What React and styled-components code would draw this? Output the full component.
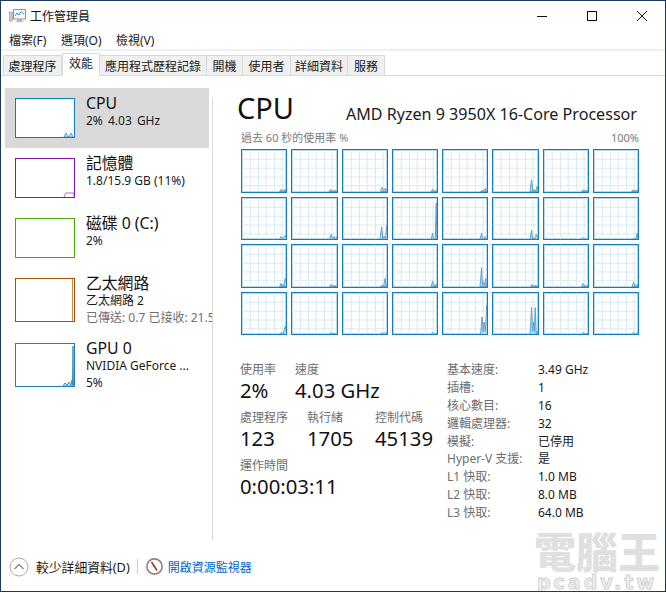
import React from 'react';
import styled, { createGlobalStyle } from 'styled-components';

const GlobalStyle = createGlobalStyle`
  html, body {
    margin: 0;
    padding: 0;
    background: #fff;
    overflow: hidden;
  }
  * {
    box-sizing: border-box;
  }
`;

const FONT = '"Noto Sans", "Noto Sans CJK TC", sans-serif';

const Window = styled.div`
  position: relative;
  width: 666px;
  height: 592px;
  display: flex;
  flex-direction: column;
  overflow: hidden;
  background: #fff;
  border: 1px solid #1b3a63;
  font-family: ${FONT};
  font-size: 12px;
  color: #1a1a1a;
  &::before {
    content: '';
    position: absolute;
    left: -1px;
    top: -1px;
    width: 330px;
    height: 1px;
    background: #6d6d6d;
  }
  &::after {
    content: '';
    position: absolute;
    left: -1px;
    top: -1px;
    width: 1px;
    height: 530px;
    background: #6d6d6d;
  }
`;

const TitleBar = styled.div`
  height: 29px;
  flex: none;
  display: flex;
  align-items: center;
  padding-left: 8px;
  gap: 4px;
`;

const TitleText = styled.span`
  font-size: 12px;
  flex: 1;
  color: #111;
`;

const WinButton = styled.div`
  width: 46px;
  height: 29px;
  display: flex;
  align-items: center;
  justify-content: center;
`;

const MenuBar = styled.div`
  height: 21px;
  flex: none;
  display: flex;
  align-items: center;
  padding-left: 8px;
  gap: 14.5px;
  border-bottom: 2px solid #f0f0f0;
`;

const MenuItem = styled.span`
  font-size: 12px;
  color: #1a1a1a;
`;

const TabBar = styled.div`
  height: 25px;
  flex: none;
  display: flex;
  align-items: flex-end;
  padding-left: 2px;
  border-bottom: 1px solid #d9d9d9;
`;

const Tab = styled.div`
  width: ${(p) => p.$width}px;
  height: ${(p) => (p.$active ? '23px' : '21px')};
  margin-bottom: -1px;
  padding-top: ${(p) => (p.$active ? '1px' : '2px')};
  border: 1px solid #d9d9d9;
  border-left-width: ${(p) => (p.$first || p.$active ? '1px' : '0')};
  border-bottom-color: ${(p) => (p.$active ? '#fff' : '#d9d9d9')};
  background: ${(p) => (p.$active ? '#fff' : '#f0f0f0')};
  font-size: 12px;
  line-height: 17px;
  text-align: center;
  white-space: nowrap;
  position: relative;
  z-index: ${(p) => (p.$active ? 1 : 0)};
`;

const Main = styled.div`
  flex: 1;
  display: flex;
  min-height: 0;
`;

const Sidebar = styled.div`
  width: 211px;
  flex: none;
  padding: 12px 0 0 4px;
  overflow: hidden;
`;

const SideItem = styled.div`
  width: 204px;
  height: ${(p) => p.$height}px;
  display: flex;
  gap: 11px;
  padding: 5px 10px;
  background: ${(p) => (p.$active ? '#d9d9d9' : 'transparent')};
`;

const Thumb = styled.div`
  width: 60px;
  height: ${(p) => p.$height}px;
  margin-top: 5px;
  flex: none;
  border: 1px solid ${(p) => p.$color};
  background: #fff;
  position: relative;
  overflow: hidden;
  & > svg {
    display: block;
  }
`;

const SideText = styled.div`
  display: flex;
  flex-direction: column;
  white-space: nowrap;
`;

const SideTitle = styled.div`
  font-size: 15.8px;
  line-height: 20px;
  color: #111;
`;

const SideSub = styled.div`
  font-size: 12px;
  line-height: 16.5px;
  word-spacing: ${(p) => (p.$spaced ? '2px' : '0')};
  color: ${(p) => (p.$muted ? '#6e6e6e' : '#1a1a1a')};
`;

const Divider = styled.div`
  width: 1px;
  flex: none;
  margin: 22px 0 0;
  background: #d9d9d9;
`;

const Detail = styled.div`
  flex: 1;
  display: flex;
  flex-direction: column;
  padding: 12px 26px 0 25px;
  min-width: 0;
`;

const Header = styled.div`
  height: 40px;
  display: flex;
  align-items: flex-start;
  justify-content: space-between;
  padding-right: 2px;
`;

const BigTitle = styled.div`
  font-size: 29px;
  line-height: 40px;
  margin-left: -1px;
  color: #111;
`;

const CpuName = styled.div`
  font-size: 16.1px;
  line-height: 24px;
  margin-top: 14px;
  color: #1a1a1a;
`;

const AxisRow = styled.div`
  display: flex;
  justify-content: space-between;
  padding-left: 3px;
  height: 21px;
  font-size: 11px;
  line-height: 20px;
  color: #7a7a7a;
`;

const ChartGrid = styled.div`
  margin-left: 3px;
  width: 398px;
  height: 186px;
  display: grid;
  grid-template-columns: repeat(8, 1fr);
  grid-template-rows: repeat(4, 1fr);
  gap: 4px;
`;

const ChartCell = styled.div`
  border: 1px solid #117dbb;
  box-shadow: inset 0 0 0 1px rgba(17, 125, 187, 0.3);
  background: #fff;
  min-width: 0;
  min-height: 0;
  overflow: hidden;
  & > svg {
    display: block;
    width: 100%;
    height: 100%;
  }
`;

const Stats = styled.div`
  display: flex;
  margin-top: 26px;
`;

const LeftStats = styled.div`
  width: 209px;
  flex: none;
  padding-left: 2px;
  display: flex;
  flex-direction: column;
  gap: 7px;
`;

const StatRow = styled.div`
  display: flex;
`;

const Stat = styled.div`
  width: ${(p) => p.$width}px;
  flex: none;
  white-space: nowrap;
`;

const StatLabel = styled.div`
  font-size: 12px;
  line-height: 17px;
  color: #6e6e6e;
`;

const StatValue = styled.div`
  font-size: 20.3px;
  line-height: 24px;
  color: #111;
`;

const SpecGrid = styled.div`
  display: grid;
  grid-template-columns: 91px auto;
  grid-auto-rows: 17.9px;
  line-height: 17.9px;
  font-size: 12px;
  white-space: nowrap;
`;

const SpecLabel = styled.div`
  color: #6e6e6e;
`;

const SpecValue = styled.div`
  color: #1a1a1a;
`;

const Footer = styled.div`
  height: 51px;
  flex: none;
  display: flex;
  align-items: center;
  padding: 2px 0 0 8px;
`;

const FooterText = styled.span`
  font-size: 12.8px;
  margin-left: 7px;
  color: #1a1a1a;
`;

const FooterSep = styled.div`
  width: 1px;
  height: 15px;
  margin: 0 8px 0 7px;
  background: #c8c8c8;
`;

const MonitorLink = styled.span`
  font-size: 12px;
  margin-left: 5px;
  color: #0066cc;
`;

const Watermark = styled.div`
  position: absolute;
  right: 3px;
  bottom: 0;
  width: 130px;
  display: flex;
  flex-direction: column;
  align-items: center;
  pointer-events: none;
  font-weight: 900;
  color: #e0e0e0;
`;

const WatermarkHan = styled.div`
  font-size: 42px;
  line-height: 42px;
  white-space: nowrap;
`;

const WatermarkLatin = styled.div`
  font-family: "DejaVu Sans", sans-serif;
  font-weight: 700;
  font-size: 19px;
  line-height: 18px;
  letter-spacing: 3px;
  white-space: nowrap;
  color: #f0f0f0;
  -webkit-text-stroke: 1px #d2d2d2;
`;

const GRID_X = [8, 16, 23.5, 31.5, 39];
const GRID_Y = [9, 17.5, 26, 34.5];

// each core: peaks as [x, height] in a 43x40 plot, measured off the picture
const CORES = [
  [[38, 2], [41, 2], [43, 2]],
  [[37.5, 2], [42, 1]],
  [[38, 4], [41, 3], [43, 2]],
  [[38.5, 2], [43, 1]],
  [[38, 1], [41, 3], [43, 1]],
  [[37.5, 11], [40, 2], [43, 5]],
  [[38, 1.5], [42, 1.5]],
  [[38, 1.5], [42, 1.5]],

  [[38, 3], [42, 4]],
  [[38, 5], [41, 3], [43, 2]],
  [[37.5, 12], [40, 3], [42.5, 14]],
  [[38.5, 6], [40, 1], [42, 35], [43, 2]],
  [[37.5, 6], [39.5, 1], [41, 3], [43, 1]],
  [[37.5, 9], [39.5, 2], [42, 5]],
  [[37.5, 2], [42.5, 1]],
  [[39, 1], [42, 6], [43, 1]],

  [[38, 3], [40, 2], [42, 8]],
  [[38, 2], [41, 1]],
  [[38, 1], [41, 8], [43, 2]],
  [[38.5, 5], [41, 2], [43, 3]],
  [[37.5, 18], [39.5, 4], [41.5, 8], [43, 1]],
  [[38, 2], [41, 1]],
  [[38, 3], [42, 1]],
  [[38.5, 4], [41, 2], [43, 2]],

  [[38, 2], [42, 8]],
  [[38, 2], [41, 1]],
  [[38, 2], [41, 2]],
  [[38.5, 2], [42, 1]],
  [[38, 17], [40, 12], [42.5, 28]],
  [[37.5, 26], [39.5, 12], [41, 26], [43, 3]],
  [[38, 2], [42, 1]],
  [[38.5, 2], [42.5, 2]],
];

const areaPath = (peaks, h) => {
  const start = peaks[0][0] - 1.5;
  let d = `M${start} ${h}`;
  peaks.forEach(([x, v], i) => {
    d += ` L${x} ${h - v}`;
    if (i < peaks.length - 1) d += ` L${(x + peaks[i + 1][0]) / 2} ${h - Math.min(v, peaks[i + 1][1]) * 0.25}`;
  });
  d += ` L44 ${h} Z`;
  return d;
};

const CoreChart = ({ peaks }) => (
  <ChartCell>
    <svg viewBox="0 0 43 40" preserveAspectRatio="none">
      {GRID_X.map((x) => (
        <line key={x} x1={x} x2={x} y1="0" y2="40" stroke="#d9eaf4" strokeWidth="1" />
      ))}
      {GRID_Y.map((y) => (
        <line key={y} x1="0" x2="43" y1={y} y2={y} stroke="#d9eaf4" strokeWidth="1" />
      ))}
      <path d={areaPath(peaks, 40)} fill="#bcd8ea" stroke="#5b9cc8" strokeWidth="0.9" />
    </svg>
  </ChartCell>
);

const TaskIcon = () => (
  <svg width="17" height="17" viewBox="0 0 17 17">
    <rect x="0.5" y="5" width="3" height="9" fill="#c4c8cc" stroke="#9aa0a4" strokeWidth="0.7" />
    <rect x="4.5" y="2.5" width="12" height="9.5" fill="#f3f7fb" stroke="#8d969e" />
    <polyline points="6,9 8,6 10,8 12,4.5 15,7" fill="none" stroke="#3f9bd8" strokeWidth="1" />
    <rect x="8" y="12" width="5" height="2" fill="#a8aeb2" />
    <rect x="6.5" y="14" width="8" height="1.2" fill="#c0c5c8" />
  </svg>
);

const MinIcon = () => (
  <svg width="10" height="10" viewBox="0 0 10 10">
    <line x1="0" x2="10" y1="5.5" y2="5.5" stroke="#111" strokeWidth="1" />
  </svg>
);

const MaxIcon = () => (
  <svg width="10" height="10" viewBox="0 0 10 10">
    <rect x="0.5" y="0.5" width="9" height="9" fill="none" stroke="#111" strokeWidth="1" />
  </svg>
);

const CloseIcon = () => (
  <svg width="10" height="10" viewBox="0 0 10 10">
    <path d="M0 0 L10 10 M10 0 L0 10" stroke="#111" strokeWidth="1" />
  </svg>
);

const CollapseIcon = () => (
  <svg width="20" height="20" viewBox="0 0 20 20">
    <circle cx="10" cy="10" r="9" fill="#fff" stroke="#a8a8a8" strokeWidth="1" />
    <polyline points="5.5,12 10,7.5 14.5,12" fill="none" stroke="#8a8a8a" strokeWidth="1.4" />
  </svg>
);

const MonitorIcon = () => (
  <svg width="17" height="17" viewBox="0 0 17 17">
    <circle cx="8.5" cy="8.5" r="7.6" fill="#fff" stroke="#8a867e" strokeWidth="1.6" />
    <line x1="5.5" y1="4" x2="11" y2="12.5" stroke="#c8202a" strokeWidth="1.5" />
    <circle cx="8.5" cy="8.5" r="1" fill="#5a5a5a" />
  </svg>
);

const SIDE_ITEMS = [
  { title: 'CPU', lines: ['2% 4.03 GHz'], spaced: true, color: '#117dbb', active: true, h: 60, tail: 'M48 38 L50 34 L52 38 L53 38 L55 34 L57 38 Z', fill: '#d9eaf4', stroke: '#4f9bcf' },
  { title: '記憶體', lines: ['1.8/15.9 GB (11%)'], color: '#8b12ae', h: 60, tail: 'M48 38 L50 34 L58 34 L58 38', fill: 'none', stroke: '#b06fc6' },
  { title: '磁碟 0 (C:)', lines: ['2%'], color: '#4da60c', h: 60 },
  { title: '乙太網路', lines: ['乙太網路 2', '已傳送: 0.7 已接收: 21.5 Mbps'], color: '#a74f01', h: 65, tall: true, tail: 'M56.5 0 L56.5 42', fill: 'none', stroke: '#c98a50' },
  { title: 'GPU 0', lines: ['NVIDIA GeForce ...', '5%'], color: '#1e7eb5', h: 60, tall: true, tail: 'M47 42 L49 39 L51 41 L53 38 L55 41 L56 36 L56.5 41 L57 2 L57.5 42 Z', fill: '#d9eaf4', stroke: '#3c8fc4' },
];

const SPECS = [
  ['基本速度:', '3.49 GHz'],
  ['插槽:', '1'],
  ['核心數目:', '16'],
  ['邏輯處理器:', '32'],
  ['模擬:', '已停用'],
  ['Hyper-V 支援:', '是'],
  ['L1 快取:', '1.0 MB'],
  ['L2 快取:', '8.0 MB'],
  ['L3 快取:', '64.0 MB'],
];

const TABS = [
  ['處理程序', 59],
  ['效能', 38],
  ['應用程式歷程記錄', 107],
  ['開機', 36],
  ['使用者', 48],
  ['詳細資料', 57],
  ['服務', 37],
];

const App = () => {
  return (
    <>
      <GlobalStyle />
      <Window>
        <TitleBar>
          <TaskIcon />
          <TitleText>工作管理員</TitleText>
          <WinButton><MinIcon /></WinButton>
          <WinButton><MaxIcon /></WinButton>
          <WinButton><CloseIcon /></WinButton>
        </TitleBar>
        <MenuBar>
          <MenuItem>檔案(F)</MenuItem>
          <MenuItem>選項(O)</MenuItem>
          <MenuItem>檢視(V)</MenuItem>
        </MenuBar>
        <TabBar>
          {TABS.map(([t, w], i) => (
            <Tab key={t} $width={w} $first={i === 0} $active={i === 1}>{t}</Tab>
          ))}
        </TabBar>
        <Main>
          <Sidebar>
            {SIDE_ITEMS.map((item) => (
              <SideItem key={item.title} $active={item.active} $height={item.h}>
                <Thumb $color={item.color} $height={item.tall ? 44 : 40}>
                  {item.tail && (
                    <svg width="58" height={item.tall ? 42 : 38}>
                      <path d={item.tail} fill={item.fill} stroke={item.stroke} strokeWidth="1" />
                    </svg>
                  )}
                </Thumb>
                <SideText>
                  <SideTitle>{item.title}</SideTitle>
                  {item.lines.map((line) => (
                    <SideSub key={line} $spaced={item.spaced} $muted={line.startsWith('已傳送')}>{line}</SideSub>
                  ))}
                </SideText>
              </SideItem>
            ))}
          </Sidebar>
          <Divider />
          <Detail>
            <Header>
              <BigTitle>CPU</BigTitle>
              <CpuName>AMD Ryzen 9 3950X 16-Core Processor</CpuName>
            </Header>
            <AxisRow>
              <span>過去 60 秒的使用率 %</span>
              <span>100%</span>
            </AxisRow>
            <ChartGrid>
              {CORES.map((peaks, i) => (
                <CoreChart key={i} peaks={peaks} />
              ))}
            </ChartGrid>
            <Stats>
              <LeftStats>
                <StatRow>
                  <Stat $width={55}>
                    <StatLabel>使用率</StatLabel>
                    <StatValue>2%</StatValue>
                  </Stat>
                  <Stat $width={100}>
                    <StatLabel>速度</StatLabel>
                    <StatValue>4.03 GHz</StatValue>
                  </Stat>
                </StatRow>
                <StatRow>
                  <Stat $width={67}>
                    <StatLabel>處理程序</StatLabel>
                    <StatValue>123</StatValue>
                  </Stat>
                  <Stat $width={68}>
                    <StatLabel>執行緒</StatLabel>
                    <StatValue>1705</StatValue>
                  </Stat>
                  <Stat $width={60}>
                    <StatLabel>控制代碼</StatLabel>
                    <StatValue>45139</StatValue>
                  </Stat>
                </StatRow>
                <StatRow>
                  <Stat $width={120}>
                    <StatLabel>運作時間</StatLabel>
                    <StatValue>0:00:03:11</StatValue>
                  </Stat>
                </StatRow>
              </LeftStats>
              <SpecGrid>
                {SPECS.map(([label, value]) => (
                  <React.Fragment key={label}>
                    <SpecLabel>{label}</SpecLabel>
                    <SpecValue>{value}</SpecValue>
                  </React.Fragment>
                ))}
              </SpecGrid>
            </Stats>
          </Detail>
        </Main>
        <Footer>
          <CollapseIcon />
          <FooterText>較少詳細資料(D)</FooterText>
          <FooterSep />
          <MonitorIcon />
          <MonitorLink>開啟資源監視器</MonitorLink>
        </Footer>
        <Watermark>
          <WatermarkHan>電腦王</WatermarkHan>
          <WatermarkLatin>pcadv.tw</WatermarkLatin>
        </Watermark>
      </Window>
    </>
  );
};

export default App;
